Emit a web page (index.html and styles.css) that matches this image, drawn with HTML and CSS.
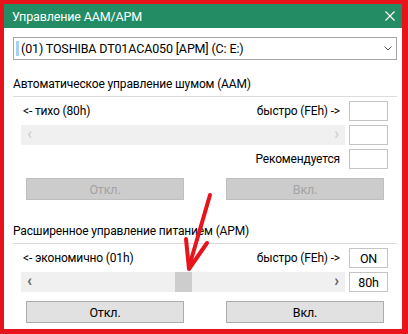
FILE: index.html
```html
<!DOCTYPE html>
<html lang="ru">
<head>
    <meta charset="UTF-8">
    <meta name="viewport" content="width=device-width, initial-scale=1.0">
    <title>Управление AAM/APM</title>
    <link rel="stylesheet" href="styles.css">
</head>
<body>
    <div class="window">
        <div class="title-bar">
            <span class="title">Управление AAM/APM</span>
            <svg class="close" width="10" height="10" viewBox="0 0 10 10">
                <path d="M0.5 0.5 L9.5 9.5 M9.5 0.5 L0.5 9.5" stroke="#fff" stroke-width="1.2" fill="none"/>
            </svg>
        </div>

        <div class="content">
            <div class="drive-select">
                <span class="caret"></span>
                <span class="drive-name">(01) TOSHIBA DT01ACA050 [APM] (C: E:)</span>
                <svg class="chevron" width="8" height="5" viewBox="0 0 8 5">
                    <path d="M0.5 0.5 L4 4 L7.5 0.5" stroke="#555" stroke-width="1" fill="none"/>
                </svg>
            </div>

            <!-- AAM -->
            <div class="group-label first">Автоматическое управление шумом (AAM)</div>
            <div class="rows">
                <div class="range-text">
                    <span>&lt;- тихо (80h)</span>
                    <span>быстро (FEh) -&gt;</span>
                </div>
                <div class="field"></div>
                <div class="scroll disabled">
                    <span class="arrow">&lsaquo;</span>
                    <span class="arrow">&rsaquo;</span>
                </div>
                <div class="field"></div>
                <div class="range-text right">Рекомендуется</div>
                <div class="field"></div>
            </div>
            <div class="buttons">
                <button class="btn" disabled>Откл.</button>
                <button class="btn" disabled>Вкл.</button>
            </div>

            <!-- APM -->
            <div class="group-label second">Расширенное управление питанием (APM)</div>
            <div class="rows">
                <div class="range-text">
                    <span>&lt;- экономично (01h)</span>
                    <span>быстро (FEh) -&gt;</span>
                </div>
                <div class="field">ON</div>
                <div class="scroll">
                    <span class="arrow">&lsaquo;</span>
                    <span class="thumb"></span>
                    <span class="arrow">&rsaquo;</span>
                </div>
                <div class="field">80h</div>
            </div>
            <div class="buttons">
                <button class="btn">Откл.</button>
                <button class="btn">Вкл.</button>
            </div>
        </div>

        <!-- стрелка-пометка поверх окна -->
        <svg class="marker" width="60" height="90" viewBox="0 0 60 90">
            <path d="M39 7 L18 79" stroke="#e8141b" stroke-width="4" stroke-linecap="round" fill="none"/>
            <path d="M15 51 L18 81 L36 55" stroke="#e8141b" stroke-width="4" stroke-linecap="round" stroke-linejoin="round" fill="none"/>
        </svg>
    </div>
</body>
</html>
```

FILE: styles.css
```css
* {
    margin: 0;
    padding: 0;
    box-sizing: border-box;
}

body {
    font-family: Roboto, 'Noto Sans', sans-serif;
    font-size: 12px;
    letter-spacing: -0.15px;
    color: #000;
    background-color: #e8141b;
    padding: 4px 6px 5px 4px;
    height: 334px;
}

.window {
    position: relative;
    height: 325px;
    background: #fff;
}

/* заголовок окна */
.title-bar {
    height: 24px;
    background-color: #248c64;
    display: flex;
    align-items: center;
    justify-content: space-between;
    padding: 0 8px 0 8px;
}

.title {
    color: #fff;
    font-size: 12.5px;
}

.close {
    margin-right: -1px;
}

.content {
    padding: 9px 5px 0 9px;
}

.drive-select {
    height: 23px;
    border: 1px solid #a6a6a6;
    display: flex;
    align-items: center;
    padding-left: 2px;
    padding-right: 4px;
    font-size: 12.5px;
}

.caret {
    width: 3px;
    height: 15px;
    background-color: #a8d1f2;
    margin-right: 2px;
}

.drive-name {
    flex: 1;
}

.group-label {
    line-height: 16px;
    padding-bottom: 4px;
    border-bottom: 1px solid #dcdcdc;
}

.group-label.first {
    margin-top: 16px;
}

.group-label.second {
    margin-top: 23px;
}

.rows {
    display: grid;
    grid-template-columns: 1fr 39px;
    grid-auto-rows: 20px;
    column-gap: 4px;
    row-gap: 4px;
    padding: 4px 9px 0 8px;
}

.range-text {
    display: flex;
    align-items: center;
    justify-content: space-between;
    padding: 0 5px 0 2px;
}

.range-text.right {
    justify-content: flex-end;
}

.field {
    border: 1px solid #c4c4c4;
    display: flex;
    align-items: center;
    justify-content: center;
    font-size: 12.5px;
}

.scroll {
    display: flex;
    align-items: stretch;
    justify-content: space-between;
    background-color: #f0f0f0;
    position: relative;
}

.arrow {
    width: 17px;
    display: flex;
    align-items: center;
    justify-content: center;
    font-size: 16px;
    font-weight: bold;
    color: #606060;
    line-height: 1;
    padding-bottom: 2px;
}

.scroll.disabled .arrow {
    color: #c8c8c8;
    font-weight: normal;
}

.thumb {
    position: absolute;
    left: 154px;
    top: 0;
    width: 17px;
    height: 100%;
    background-color: #cdcdcd;
}

.buttons {
    display: grid;
    grid-template-columns: 158px 158px;
    justify-content: space-between;
    padding: 0 13px;
    margin-top: 9px;
}

.btn {
    height: 22px;
    font-family: inherit;
    font-size: 12.5px;
    letter-spacing: inherit;
    background-color: #e1e1e1;
    border: 1px solid #adadad;
    color: #000;
}

.btn:disabled {
    background-color: #cccccc;
    border-color: #bfbfbf;
    color: #a3a3a3;
}

.marker {
    position: absolute;
    left: 167px;
    top: 184px;
}
```
